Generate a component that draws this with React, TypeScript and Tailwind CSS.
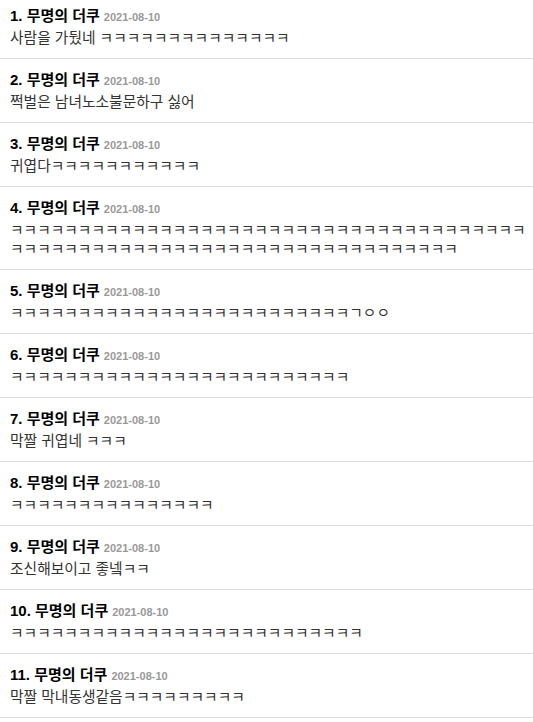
import React from "react";

const items: { n: number; lines: string[] }[] = [
  { n: 1, lines: ["사람을 가뒀네 ㅋㅋㅋㅋㅋㅋㅋㅋㅋㅋㅋㅋㅋㅋ"] },
  { n: 2, lines: ["쩍벌은 남녀노소불문하구 싫어"] },
  { n: 3, lines: ["귀엽다ㅋㅋㅋㅋㅋㅋㅋㅋㅋㅋㅋ"] },
  {
    n: 4,
    lines: [
      "ㅋㅋㅋㅋㅋㅋㅋㅋㅋㅋㅋㅋㅋㅋㅋㅋㅋㅋㅋㅋㅋㅋㅋㅋㅋㅋㅋㅋㅋㅋㅋㅋㅋㅋㅋㅋㅋㅋ",
      "ㅋㅋㅋㅋㅋㅋㅋㅋㅋㅋㅋㅋㅋㅋㅋㅋㅋㅋㅋㅋㅋㅋㅋㅋㅋㅋㅋㅋㅋㅋㅋㅋㅋ",
    ],
  },
  { n: 5, lines: ["ㅋㅋㅋㅋㅋㅋㅋㅋㅋㅋㅋㅋㅋㅋㅋㅋㅋㅋㅋㅋㅋㅋㅋㅋㅋㄱㅇㅇ"] },
  { n: 6, lines: ["ㅋㅋㅋㅋㅋㅋㅋㅋㅋㅋㅋㅋㅋㅋㅋㅋㅋㅋㅋㅋㅋㅋㅋㅋㅋ"] },
  { n: 7, lines: ["막짤 귀엽네 ㅋㅋㅋ"] },
  { n: 8, lines: ["ㅋㅋㅋㅋㅋㅋㅋㅋㅋㅋㅋㅋㅋㅋㅋ"] },
  { n: 9, lines: ["조신해보이고 좋넼ㅋㅋ"] },
  { n: 10, lines: ["ㅋㅋㅋㅋㅋㅋㅋㅋㅋㅋㅋㅋㅋㅋㅋㅋㅋㅋㅋㅋㅋㅋㅋㅋㅋㅋ"] },
  { n: 11, lines: ["막짤 막내동생같음ㅋㅋㅋㅋㅋㅋㅋㅋㅋ"] },
];

export default function App() {
  return (
    <div
      className="w-[533px] bg-white"
      style={{ fontFamily: '"Liberation Sans", "Noto Sans CJK KR", sans-serif' }}
    >
      {items.map((it, i) => (
        <div
          key={it.n}
          className={`border-b border-[#dddddd] pl-[10px] pr-[2px] pb-[10px] ${
            i === 0 ? "pt-[5px]" : "pt-[10px]"
          }`}
        >
          <div className="flex h-[21px] items-baseline overflow-visible leading-[21px]">
            <span className="text-[15px] font-bold text-black">
              {it.n}. 무명의 더쿠
            </span>
            <span className="ml-[4px] text-[11px] font-bold text-[#999999]">
              2021-08-10
            </span>
          </div>
          <div className="mt-[3px] text-[14.75px] text-[#333333] whitespace-nowrap">
            {it.lines.map((l, j) => (
              <div key={j} className="h-[19px] leading-[19px]">
                {l}
              </div>
            ))}
          </div>
        </div>
      ))}
    </div>
  );
}
